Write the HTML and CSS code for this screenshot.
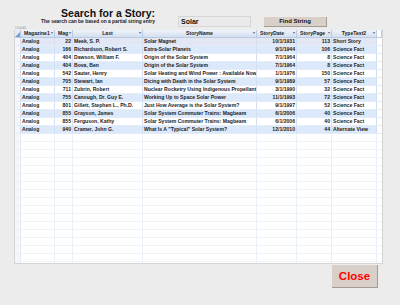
FILE: index.html
```html
<!DOCTYPE html>
<html lang="en">
<head>
    <meta charset="UTF-8">
    <title>Search for a Story</title>
    <link rel="stylesheet" href="styles.css">
</head>
<body>
    <div class="top">
        <div class="titles">
            <h1>Search for a Story:</h1>
            <p class="hint">The search can be based on a partial string entry</p>
            <div class="child-label">Child0</div>
        </div>
        <div class="search-box">Solar</div>
        <button class="find-btn">Find String</button>
    </div>

    <div class="grid">
        <div class="row head">
            <div class="cell sel"><svg width="5" height="5" viewBox="0 0 5 5"><polygon points="5,0 5,5 0,5" fill="#7a9fd0"/></svg></div>
            <div class="cell left">Magazine1<span class="arrow">▾</span></div>
            <div class="cell left">Mag<span class="arrow">▾</span></div>
            <div class="cell center">Last<span class="arrow">▾</span></div>
            <div class="cell center">StoryName<span class="arrow">▾</span></div>
            <div class="cell left">StoryDate<span class="arrow">▾</span></div>
            <div class="cell left">StoryPage<span class="arrow">▾</span></div>
            <div class="cell center">TypeText2<span class="arrow">▾</span></div>
            <div class="cell blank"></div>
        </div>

        <div class="row current">
            <div class="cell sel"></div><div class="cell">Analog</div><div class="cell num">22</div><div class="cell">Meek, S. P.</div><div class="cell">Solar Magnet</div><div class="cell num">10/1/1931</div><div class="cell num">113</div><div class="cell">Short Story</div><div class="cell blank"></div>
        </div>
        <div class="row alt">
            <div class="cell sel"></div><div class="cell">Analog</div><div class="cell num">166</div><div class="cell">Richardson, Robert S.</div><div class="cell">Extra-Solar Planets</div><div class="cell num">9/1/1944</div><div class="cell num">106</div><div class="cell">Science Fact</div><div class="cell blank"></div>
        </div>
        <div class="row">
            <div class="cell sel"></div><div class="cell">Analog</div><div class="cell num">404</div><div class="cell">Dawson, William F.</div><div class="cell">Origin of the Solar System</div><div class="cell num">7/1/1964</div><div class="cell num">8</div><div class="cell">Science Fact</div><div class="cell blank"></div>
        </div>
        <div class="row alt">
            <div class="cell sel"></div><div class="cell">Analog</div><div class="cell num">404</div><div class="cell">Bova, Ben</div><div class="cell">Origin of the Solar System</div><div class="cell num">7/1/1964</div><div class="cell num">8</div><div class="cell">Science Fact</div><div class="cell blank"></div>
        </div>
        <div class="row">
            <div class="cell sel"></div><div class="cell">Analog</div><div class="cell num">542</div><div class="cell">Sauter, Henry</div><div class="cell">Solar Heating and Wind Power : Available Now</div><div class="cell num">1/1/1976</div><div class="cell num">150</div><div class="cell">Science Fact</div><div class="cell blank"></div>
        </div>
        <div class="row alt">
            <div class="cell sel"></div><div class="cell">Analog</div><div class="cell num">705</div><div class="cell">Stewart, Ian</div><div class="cell">Dicing with Death in the Solar System</div><div class="cell num">9/1/1989</div><div class="cell num">57</div><div class="cell">Science Fact</div><div class="cell blank"></div>
        </div>
        <div class="row">
            <div class="cell sel"></div><div class="cell">Analog</div><div class="cell num">711</div><div class="cell">Zubrin, Robert</div><div class="cell">Nuclear Rocketry Using Indigenous Propellants</div><div class="cell num">3/1/1990</div><div class="cell num">32</div><div class="cell">Science Fact</div><div class="cell blank"></div>
        </div>
        <div class="row alt">
            <div class="cell sel"></div><div class="cell">Analog</div><div class="cell num">755</div><div class="cell">Canough, Dr. Guy E.</div><div class="cell">Working Up to Space Solar Power</div><div class="cell num">11/1/1993</div><div class="cell num">72</div><div class="cell">Science Fact</div><div class="cell blank"></div>
        </div>
        <div class="row">
            <div class="cell sel"></div><div class="cell">Analog</div><div class="cell num">801</div><div class="cell">Gillett, Stephen L., Ph.D.</div><div class="cell">Just How Average is the Solar System?</div><div class="cell num">9/1/1997</div><div class="cell num">52</div><div class="cell">Science Fact</div><div class="cell blank"></div>
        </div>
        <div class="row alt">
            <div class="cell sel"></div><div class="cell">Analog</div><div class="cell num">855</div><div class="cell">Grayson, James</div><div class="cell">Solar System Commuter Trains: Magbeam</div><div class="cell num">6/1/2006</div><div class="cell num">40</div><div class="cell">Science Fact</div><div class="cell blank"></div>
        </div>
        <div class="row">
            <div class="cell sel"></div><div class="cell">Analog</div><div class="cell num">855</div><div class="cell">Ferguson, Kathy</div><div class="cell">Solar System Commuter Trains: Magbeam</div><div class="cell num">6/1/2006</div><div class="cell num">40</div><div class="cell">Science Fact</div><div class="cell blank"></div>
        </div>
        <div class="row alt">
            <div class="cell sel"></div><div class="cell">Analog</div><div class="cell num">940</div><div class="cell">Cramer, John G.</div><div class="cell">What Is A "Typical" Solar System?</div><div class="cell num">12/1/2010</div><div class="cell num">44</div><div class="cell">Alternate View</div><div class="cell blank"></div>
        </div>

        <div class="empty-rows"></div>
    </div>

    <div class="footer">
        <button class="close-btn">Close</button>
    </div>
</body>
</html>
```

FILE: styles.css
```css
body {
    margin: 0;
    background: #ececec;
    font-family: "Liberation Sans", Arial, sans-serif;
    font-weight: bold;
    color: #1a1a1a;
    width: 400px;
    height: 305px;
    overflow: hidden;
}

.top {
    display: flex;
    align-items: flex-start;
    height: 30px;
}

.titles {
    width: 155px;
    padding-top: 8px;
    box-sizing: border-box;
}

h1 {
    margin: 0;
    font-size: 10.5px;
    line-height: 11px;
    text-align: right;
    color: #111;
}

.hint {
    margin: 0;
    font-size: 4.9px;
    line-height: 6px;
    text-align: right;
    color: #222;
}

.child-label {
    padding-left: 15px;
    font-size: 4px;
    line-height: 5px;
    font-weight: normal;
    color: #9a9a9a;
}

.search-box {
    margin: 16px 0 0 23px;
    width: 73px;
    height: 11px;
    box-sizing: border-box;
    background: #eaeaea;
    border: 1px solid #d6d6d6;
    font-size: 7px;
    line-height: 9px;
    padding-left: 2px;
    color: #111;
}

.find-btn {
    margin: 17px 0 0 13px;
    width: 63px;
    height: 10px;
    padding: 0;
    box-sizing: border-box;
    background: #d8d0c8;
    border: none;
    border-right: 1px solid #a39c95;
    border-bottom: 1px solid #a39c95;
    font-family: "Liberation Sans", Arial, sans-serif;
    font-weight: bold;
    font-size: 6px;
    line-height: 9px;
    color: #111;
}

.grid {
    margin-left: 14px;
    width: 369px;
    height: 234px;
    box-sizing: border-box;
    background: #fff;
    border: 1px solid #d4d4d4;
    border-top: none;
    overflow: hidden;
}

.row {
    display: grid;
    grid-template-columns: 6px 34px 18px 70px 114px 40px 35px 45px 5px;
    height: 8px;
    box-sizing: border-box;
    border-bottom: 1px solid #e4ecf7;
    font-size: 5.1px;
    line-height: 7px;
}

.row.alt {
    background: #dce9fb;
}

.row.current {
    background: #e2e7f3;
}

.row.head {
    background: linear-gradient(#eef3fa, #d3dfef);
    border-bottom: 1px solid #b9cbe2;
    color: #222;
}

.cell {
    position: relative;
    padding: 0 1px;
    border-right: 1px solid #d2dff0;
    white-space: nowrap;
    overflow: hidden;
}

.row.head .cell {
    border-right: 1px solid #b9cbe2;
}

.cell.sel {
    padding: 0;
    background: #f4f6fb;
}

.row.head .cell.sel {
    background: #e6edf7;
    display: flex;
    align-items: flex-end;
    justify-content: flex-end;
}

.cell.blank {
    border-right: none;
    background: #fff;
}

.cell.num {
    text-align: right;
}

.cell.center {
    text-align: center;
}

.cell.left {
    padding-left: 3px;
}

.arrow {
    position: absolute;
    right: 1px;
    top: 0;
    font-size: 3.5px;
    color: #777;
}

.empty-rows {
    height: 130px;
    background:
        repeating-linear-gradient(to bottom, transparent 0, transparent 7px, #eef3fa 7px, #eef3fa 8px),
        linear-gradient(to right, #f4f6fb 0, #f4f6fb 5px, #e2e9f4 5px, #e2e9f4 6px, transparent 6px);
    position: relative;
}

.empty-rows::after {
    content: "";
    position: absolute;
    inset: 0;
    background: linear-gradient(to right,
        transparent 39px, #eaf0f9 39px, #eaf0f9 40px,
        transparent 40px, transparent 57px, #eaf0f9 57px, #eaf0f9 58px,
        transparent 58px, transparent 127px, #eaf0f9 127px, #eaf0f9 128px,
        transparent 128px, transparent 241px, #eaf0f9 241px, #eaf0f9 242px,
        transparent 242px, transparent 281px, #eaf0f9 281px, #eaf0f9 282px,
        transparent 282px, transparent 316px, #eaf0f9 316px, #eaf0f9 317px,
        transparent 317px, transparent 361px, #eaf0f9 361px, #eaf0f9 362px,
        transparent 362px);
}

.footer {
    display: flex;
    justify-content: flex-end;
    padding: 1px 22px 0 0;
}

.close-btn {
    width: 46px;
    height: 23px;
    padding: 0;
    background: #d8d0c8;
    border: none;
    border-right: 1px solid #a39c95;
    border-bottom: 1px solid #a39c95;
    font-family: "Liberation Sans", Arial, sans-serif;
    font-weight: bold;
    font-size: 11.5px;
    color: #ff0000;
}
```
